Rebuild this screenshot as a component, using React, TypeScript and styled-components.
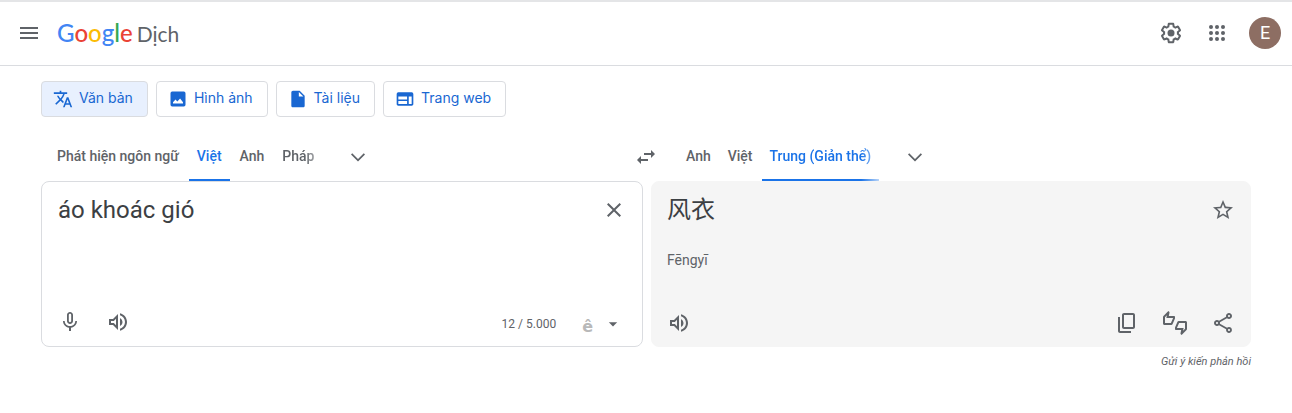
import React from "react";
import styled, { createGlobalStyle, css } from "styled-components";
import {
  MdArrowDropDown,
  MdClose,
  MdInsertDriveFile,
  MdMenu,
  MdMicNone,
  MdOutlineShare,
  MdOutlineThumbsUpDown,
  MdOutlineVolumeUp,
  MdStarBorder,
  MdSwapHoriz,
  MdTranslate,
} from "react-icons/md";

const GlobalStyle = createGlobalStyle`
  * { box-sizing: border-box; }
  body {
    margin: 0;
    background: #fff;
    color: #3c4043;
    font-family: Roboto, "Noto Sans CJK SC", sans-serif;
    font-size: 14px;
  }
  button, textarea { font: inherit; color: inherit; }
`;

const Header = styled.header`
  display: flex;
  align-items: center;
  justify-content: space-between;
  height: 66px;
  padding: 0 11px 1px 9px;
  border-top: 2px solid #e4e5e7;
  border-bottom: 1px solid #dadce0;
`;

const HeaderGroup = styled.div<{ $gap: number }>`
  display: flex;
  align-items: center;
  gap: ${(p) => p.$gap}px;
`;

const IconButton = styled.button`
  display: flex;
  flex: none;
  align-items: center;
  justify-content: center;
  width: 40px;
  height: 40px;
  padding: 0;
  border: 0;
  border-radius: 50%;
  background: none;
  color: #5f6368;
  cursor: pointer;
`;

const Brand = styled.a`
  display: flex;
  align-items: baseline;
  gap: 4px;
  color: #5f6368;
  font-family: Lato, sans-serif;
  font-size: 21px;
  line-height: 32px;
  text-decoration: none;
`;

const Wordmark = styled.span`
  font-size: 24px;
  font-weight: 500;
`;

const Letter = styled.span<{ $color: string }>`
  color: ${(p) => p.$color};
`;

const Avatar = styled.button`
  width: 32px;
  height: 32px;
  margin-left: 6px;
  padding: 0;
  border: 0;
  border-radius: 50%;
  background: #8d6e63;
  color: #fff;
  font-size: 18px;
  line-height: 32px;
`;

const Main = styled.main`
  padding: 15px 41px;
`;

const Modes = styled.nav`
  display: flex;
  gap: 8px;
`;

const ModeButton = styled.button<{ $active?: boolean }>`
  display: flex;
  align-items: center;
  gap: 6px;
  height: 36px;
  padding: 0 14px 0 11px;
  border: 1px solid #dadce0;
  border-radius: 4px;
  background: ${(p) => (p.$active ? "#e8f0fe" : "#fff")};
  color: #1967d2;
  font-family: Inter, sans-serif;
  font-size: 14px;
  line-height: 16px;
  white-space: nowrap;
  cursor: pointer;
`;

const ModeLabel = styled.span`
  padding-bottom: 2px;
`;

const Translator = styled.div`
  display: grid;
  grid-template-columns: 602fr 600fr;
  column-gap: 8px;
  margin-top: 16px;
`;

const LanguageBar = styled.div<{ $target?: boolean }>`
  display: flex;
  align-items: center;
  height: 48px;
  padding-left: ${(p) => (p.$target ? 27 : 8)}px;
`;

const Tabs = styled.div<{ $gap: number }>`
  display: flex;
  gap: ${(p) => p.$gap}px;
  height: 48px;
`;

const Tab = styled.button<{ $active?: boolean; $faded?: boolean }>`
  height: 48px;
  padding: 0 8px;
  border: 0;
  border-bottom: 2px solid transparent;
  background: none;
  color: #5f6368;
  font-weight: 500;
  white-space: nowrap;
  cursor: pointer;
  ${(p) =>
    p.$active &&
    css`
      border-bottom-color: #1a73e8;
      color: #1a73e8;
    `}
  ${(p) =>
    p.$faded &&
    css`
      mask-image: linear-gradient(to left, rgba(0, 0, 0, 0.3), #000 18px);
    `}
`;

const MoreButton = styled(IconButton)`
  margin-left: 16px;
`;

const SwapButton = styled(IconButton)`
  margin-left: auto;
  margin-right: -23px;
`;

const Panel = styled.section<{ $filled?: boolean }>`
  display: flex;
  flex-direction: column;
  min-height: 166px;
  padding: ${(p) => (p.$filled ? "8px 7px 3px" : "8px 8px 4px")};
  border: 1px solid ${(p) => (p.$filled ? "#f5f5f5" : "#dadce0")};
  border-radius: 8px;
  background: ${(p) => (p.$filled ? "#f5f5f5" : "#fff")};
`;

const PanelTop = styled.div`
  display: flex;
  flex: 1;
  align-items: flex-start;
  padding-left: 8px;
`;

const SourceText = styled.textarea`
  flex: 1;
  min-width: 0;
  height: 88px;
  padding: 4px 0;
  border: 0;
  outline: 0;
  resize: none;
  background: none;
  font-size: 24px;
  line-height: 32px;
`;

const Result = styled.div`
  flex: 1;
`;

const ResultText = styled.p`
  margin: 0;
  padding-top: 4px;
  font-size: 24px;
  line-height: 32px;
`;

const Romanization = styled.p`
  margin: 24px 0 0;
  color: #5f6368;
  line-height: 20px;
`;

const PanelActions = styled.div`
  display: flex;
  align-items: center;
  gap: 8px;
  height: 40px;
`;

const Spacer = styled.div`
  flex: 1;
`;

const Counter = styled.span`
  padding-top: 3px;
  color: #5f6368;
  font-size: 12px;
  line-height: 16px;
`;

const InputTool = styled.button`
  display: flex;
  align-items: center;
  gap: 10px;
  height: 24px;
  margin: 4px 11px 0 18px;
  padding: 0;
  border: 0;
  background: none;
  color: #5f6368;
`;

const InputGlyph = styled.span`
  padding-top: 5px;
  color: #b8b8b8;
  font-family: "DejaVu Sans", sans-serif;
  font-size: 16px;
  font-weight: 700;
`;

const Feedback = styled.a`
  grid-column: 2;
  justify-self: end;
  margin-top: 7px;
  color: #5f6368;
  font-size: 11px;
  font-style: italic;
  line-height: 16px;
  text-decoration: none;
`;

const icon = { width: 24, height: 24, viewBox: "0 0 24 24", fill: "currentColor", "aria-hidden": true } as const;

const ChevronIcon = () => (
  <svg {...icon}>
    <path d="M5.41 7.59L4 9l8 8 8-8-1.41-1.41L12 14.17z" transform="translate(1.5 1.5) scale(.875)" />
  </svg>
);

const SettingsIcon = () => (
  <svg {...icon}>
    <path d="M13.85 22.25h-3.7c-.74 0-1.36-.54-1.45-1.27l-.27-1.89c-.27-.14-.53-.29-.79-.46l-1.8.72c-.7.26-1.47-.03-1.81-.65L2.2 15.53c-.35-.66-.2-1.44.36-1.88l1.53-1.19c-.01-.15-.02-.3-.02-.46 0-.15.01-.31.02-.46l-1.52-1.19c-.59-.45-.74-1.26-.37-1.88l1.85-3.19c.34-.62 1.11-.9 1.79-.63l1.81.73c.26-.17.52-.32.78-.46l.27-1.91c.09-.7.71-1.25 1.44-1.25h3.7c.74 0 1.36.54 1.45 1.27l.27 1.89c.27.14.53.29.79.46l1.8-.72c.71-.26 1.48.03 1.82.65l1.84 3.18c.36.66.2 1.44-.36 1.88l-1.52 1.19c.01.15.02.3.02.46s-.01.31-.02.46l1.52 1.19c.56.45.72 1.23.37 1.86l-1.86 3.22c-.34.62-1.11.9-1.8.63l-1.8-.72c-.26.17-.52.32-.78.46l-.27 1.91c-.1.68-.72 1.22-1.46 1.22zm-3.23-2h2.76l.37-2.55.53-.22c.44-.18.88-.44 1.34-.78l.45-.34 2.38.96 1.38-2.4-2.03-1.58.07-.56c.03-.26.06-.51.06-.78s-.03-.53-.06-.78l-.07-.56 2.03-1.58-1.39-2.4-2.39.96-.45-.35c-.42-.32-.87-.58-1.33-.77l-.52-.22-.37-2.55h-2.76l-.37 2.55-.53.21c-.44.19-.88.44-1.34.79l-.45.33-2.38-.95-1.39 2.39 2.03 1.58-.07.56a7 7 0 0 0-.06.79c0 .26.02.53.06.78l.07.56-2.03 1.58 1.38 2.4 2.39-.96.45.35c.43.33.86.58 1.33.77l.53.22.38 2.55z" />
    <circle cx="12" cy="12" r="3.5" />
  </svg>
);

const AppsIcon = () => (
  <svg {...icon}>
    {[6, 12, 18].map((y) => [6, 12, 18].map((x) => <circle key={`${x}-${y}`} cx={x} cy={y} r="2" />))}
  </svg>
);

const CopyIcon = () => (
  <svg {...icon}>
    <path d="M9 18c-1.1 0-2-.9-2-2V4c0-1.1.9-2 2-2h9c1.1 0 2 .9 2 2v12c0 1.1-.9 2-2 2H9zm0-2h9V4H9v12zM5 22c-1.1 0-2-.9-2-2V6h2v14h11v2H5z" />
  </svg>
);

const ImageIcon = () => (
  <svg {...icon} width={20} height={20}>
    <path d="M19 3H5a2 2 0 0 0-2 2v14a2 2 0 0 0 2 2h14a2 2 0 0 0 2-2V5a2 2 0 0 0-2-2zM6 17.500v-1.500l3-3.500 2.200 2.500L14.500 11.500 18 16v1.500z" />
  </svg>
);

const WebIcon = () => (
  <svg {...icon} width={20} height={20}>
    <path d="M20 4H4a2 2 0 0 0-2 2v12c0 1.100.9 2 2 2h16c1.100 0 2-.9 2-2V6a2 2 0 0 0-2-2zM4 9h10.500v3.500H4zM4 14.500h10.500V18H4zM20 18h-3.500V9H20z" />
  </svg>
);

const GOOGLE: [string, string][] = [
  ["G", "#4285f4"],
  ["o", "#ea4335"],
  ["o", "#fbbc05"],
  ["g", "#4285f4"],
  ["l", "#34a853"],
  ["e", "#ea4335"],
];

const MODES = [
  { label: "Văn bản", icon: <MdTranslate size={20} />, active: true },
  { label: "Hình ảnh", icon: <ImageIcon /> },
  { label: "Tài liệu", icon: <MdInsertDriveFile size={20} /> },
  { label: "Trang web", icon: <WebIcon /> },
];

export default function App() {
  return (
    <>
      <GlobalStyle />
      <Header>
        <HeaderGroup $gap={8}>
          <IconButton aria-label="Menu">
            <MdMenu size={24} />
          </IconButton>
          <Brand href="#">
            <Wordmark>
              {GOOGLE.map(([char, color], i) => (
                <Letter key={i} $color={color}>
                  {char}
                </Letter>
              ))}
            </Wordmark>
            <span>Dịch</span>
          </Brand>
        </HeaderGroup>
        <HeaderGroup $gap={6}>
          <IconButton aria-label="Cài đặt">
            <SettingsIcon />
          </IconButton>
          <IconButton aria-label="Ứng dụng">
            <AppsIcon />
          </IconButton>
          <Avatar aria-label="Tài khoản">E</Avatar>
        </HeaderGroup>
      </Header>
      <Main>
        <Modes>
          {MODES.map((m) => (
            <ModeButton key={m.label} $active={m.active}>
              {m.icon}
              <ModeLabel>{m.label}</ModeLabel>
            </ModeButton>
          ))}
        </Modes>
        <Translator>
          <LanguageBar>
            <Tabs $gap={2}>
              <Tab>Phát hiện ngôn ngữ</Tab>
              <Tab $active>Việt</Tab>
              <Tab>Anh</Tab>
              <Tab $faded>Pháp</Tab>
            </Tabs>
            <MoreButton aria-label="Thêm ngôn ngữ nguồn">
              <ChevronIcon />
            </MoreButton>
            <SwapButton aria-label="Hoán đổi ngôn ngữ">
              <MdSwapHoriz size={24} />
            </SwapButton>
          </LanguageBar>
          <LanguageBar $target>
            <Tabs $gap={1}>
              <Tab>Anh</Tab>
              <Tab>Việt</Tab>
              <Tab $active $faded>
                Trung (Giản thể)
              </Tab>
            </Tabs>
            <MoreButton aria-label="Thêm ngôn ngữ đích">
              <ChevronIcon />
            </MoreButton>
          </LanguageBar>
          <Panel>
            <PanelTop>
              <SourceText aria-label="Văn bản nguồn" defaultValue="áo khoác gió" spellCheck={false} />
              <IconButton aria-label="Xóa văn bản nguồn">
                <MdClose size={24} />
              </IconButton>
            </PanelTop>
            <PanelActions>
              <IconButton aria-label="Dịch bằng giọng nói">
                <MdMicNone size={24} />
              </IconButton>
              <IconButton aria-label="Nghe">
                <MdOutlineVolumeUp size={24} />
              </IconButton>
              <Spacer />
              <Counter>12 / 5.000</Counter>
              <InputTool aria-label="Công cụ nhập">
                <InputGlyph>ê</InputGlyph>
                <MdArrowDropDown size={20} />
              </InputTool>
            </PanelActions>
          </Panel>
          <Panel $filled>
            <PanelTop>
              <Result>
                <ResultText lang="zh-CN">风衣</ResultText>
                <Romanization>Fēngyī</Romanization>
              </Result>
              <IconButton aria-label="Lưu bản dịch">
                <MdStarBorder size={24} />
              </IconButton>
            </PanelTop>
            <PanelActions>
              <IconButton aria-label="Nghe bản dịch">
                <MdOutlineVolumeUp size={24} />
              </IconButton>
              <Spacer />
              <IconButton aria-label="Sao chép bản dịch">
                <CopyIcon />
              </IconButton>
              <IconButton aria-label="Xếp hạng bản dịch">
                <MdOutlineThumbsUpDown size={24} />
              </IconButton>
              <IconButton aria-label="Chia sẻ bản dịch">
                <MdOutlineShare size={24} />
              </IconButton>
            </PanelActions>
          </Panel>
          <Feedback href="#">Gửi ý kiến phản hồi</Feedback>
        </Translator>
      </Main>
    </>
  );
}
